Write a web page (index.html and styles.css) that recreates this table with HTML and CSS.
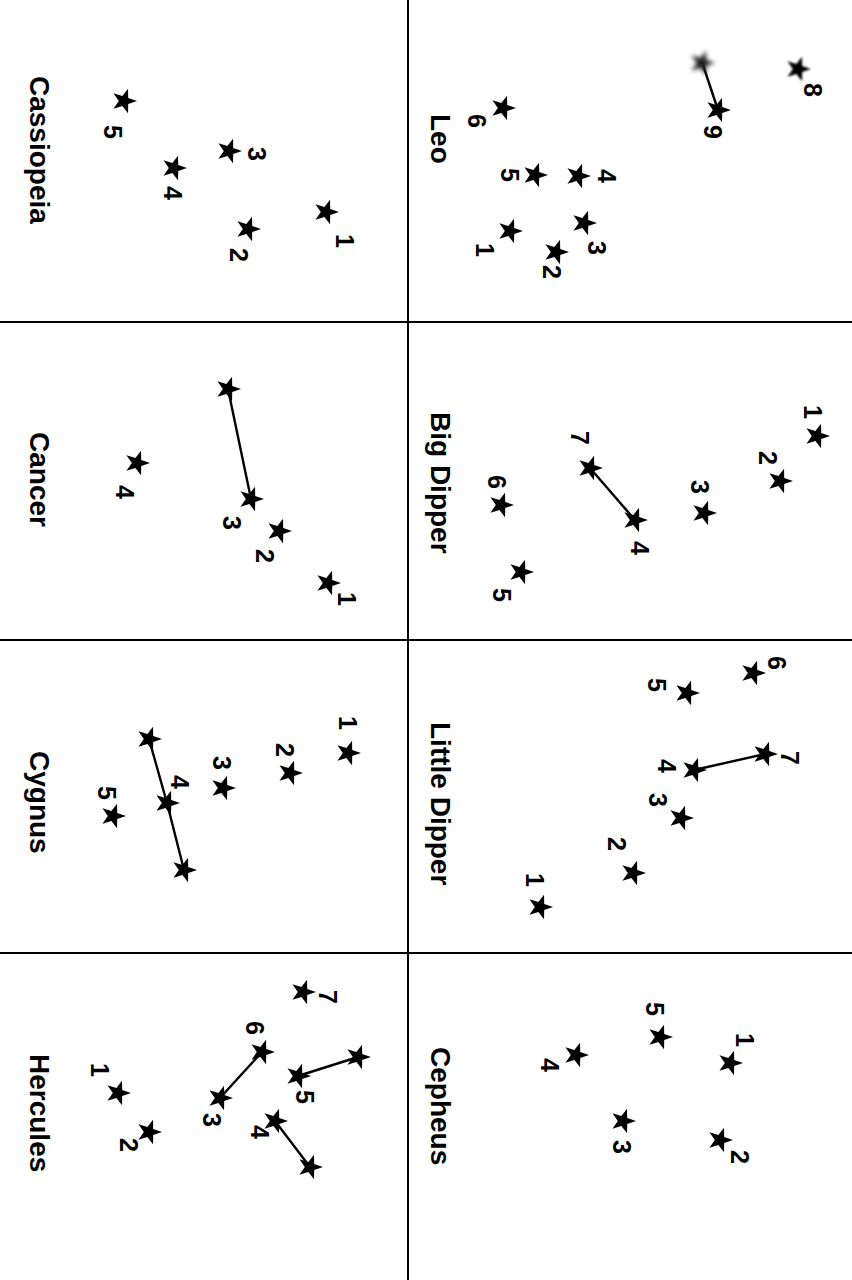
FILE: index.html
```html
<!DOCTYPE html>
<html lang="en">
<head>
<meta charset="utf-8">
<title>Constellations</title>
<link rel="stylesheet" href="styles.css">
</head>
<body>
<svg class="defs" aria-hidden="true">
  <defs>
    <path id="star" d="M13 0 L4.21 3.06 L4.02 12.36 L-1.61 4.95 L-10.52 7.64 L-5.2 0 L-10.52 -7.64 L-1.61 -4.95 L4.02 -12.36 L4.21 -3.06 Z"/>
    <filter id="smudge" x="-50%" y="-50%" width="200%" height="200%"><feGaussianBlur stdDeviation="2.2"/></filter>
    <filter id="soft" x="-50%" y="-50%" width="200%" height="200%"><feGaussianBlur stdDeviation="0.9"/></filter>
  </defs>
</svg>
<main class="sheet">
  <section class="cell cell-cassiopeia">
    <h2 class="title">Cassiopeia</h2>
    <svg class="sky" viewBox="0 0 407 321">
      <use href="#star" x="124" y="101"/><text class="num" transform="translate(113 132) rotate(90)">5</text>
      <use href="#star" x="229" y="151"/><text class="num" transform="translate(257 154) rotate(90)">3</text>
      <use href="#star" x="174" y="168"/><text class="num" transform="translate(173 193) rotate(90)">4</text>
      <use href="#star" x="326" y="212"/><text class="num" transform="translate(345 241) rotate(90)">1</text>
      <use href="#star" x="248" y="229"/><text class="num" transform="translate(239 255) rotate(90)">2</text>
    </svg>
  </section>
  <section class="cell cell-leo">
    <h2 class="title">Leo</h2>
    <svg class="sky" viewBox="409 0 443 321">
      <line class="link" x1="702" y1="62" x2="718" y2="110"/>
      <use href="#star" x="702" y="63" class="smudged"/>
      <use href="#star" x="798" y="69" class="soft"/><text class="num" transform="translate(813 90) rotate(90)">8</text>
      <use href="#star" x="718" y="110"/><text class="num" transform="translate(713 132) rotate(90)">9</text>
      <use href="#star" x="503" y="108"/><text class="num" transform="translate(477 121) rotate(90)">6</text>
      <use href="#star" x="535" y="175"/><text class="num" transform="translate(510 175) rotate(90)">5</text>
      <use href="#star" x="578" y="176"/><text class="num" transform="translate(607 176) rotate(90)">4</text>
      <use href="#star" x="510" y="231"/><text class="num" transform="translate(485 250) rotate(90)">1</text>
      <use href="#star" x="584" y="223"/><text class="num" transform="translate(597 248) rotate(90)">3</text>
      <use href="#star" x="556" y="252"/><text class="num" transform="translate(552 272) rotate(90)">2</text>
    </svg>
  </section>
  <section class="cell cell-cancer">
    <h2 class="title">Cancer</h2>
    <svg class="sky" viewBox="0 323 407 316">
      <line class="link" x1="228" y1="389" x2="251" y2="499"/>
      <use href="#star" x="228" y="389"/>
      <use href="#star" x="251" y="499"/><text class="num" transform="translate(232 523) rotate(90)">3</text>
      <use href="#star" x="279" y="531"/><text class="num" transform="translate(265 556) rotate(90)">2</text>
      <use href="#star" x="328" y="583"/><text class="num" transform="translate(347 599) rotate(90)">1</text>
      <use href="#star" x="137" y="463"/><text class="num" transform="translate(125 492) rotate(90)">4</text>
    </svg>
  </section>
  <section class="cell cell-bigdipper">
    <h2 class="title">Big Dipper</h2>
    <svg class="sky" viewBox="409 323 443 316">
      <line class="link" x1="590" y1="468" x2="635" y2="520"/>
      <use href="#star" x="817" y="436"/><text class="num" transform="translate(813 412) rotate(90)">1</text>
      <use href="#star" x="780" y="481"/><text class="num" transform="translate(768 458) rotate(90)">2</text>
      <use href="#star" x="704" y="513"/><text class="num" transform="translate(700 487) rotate(90)">3</text>
      <use href="#star" x="590" y="468"/><text class="num" transform="translate(580 438) rotate(90)">7</text>
      <use href="#star" x="635" y="520"/><text class="num" transform="translate(640 548) rotate(90)">4</text>
      <use href="#star" x="501" y="505"/><text class="num" transform="translate(497 482) rotate(90)">6</text>
      <use href="#star" x="521" y="572"/><text class="num" transform="translate(502 595) rotate(90)">5</text>
    </svg>
  </section>
  <section class="cell cell-cygnus">
    <h2 class="title">Cygnus</h2>
    <svg class="sky" viewBox="0 641 407 311">
      <polyline class="link" points="149,739 167,803 184,870"/>
      <use href="#star" x="149" y="739"/>
      <use href="#star" x="167" y="803"/><text class="num" transform="translate(180 782) rotate(90)">4</text>
      <use href="#star" x="184" y="870"/>
      <use href="#star" x="113" y="816"/><text class="num" transform="translate(107 793) rotate(90)">5</text>
      <use href="#star" x="223" y="788"/><text class="num" transform="translate(222 763) rotate(90)">3</text>
      <use href="#star" x="290" y="773"/><text class="num" transform="translate(285 750) rotate(90)">2</text>
      <use href="#star" x="348" y="753"/><text class="num" transform="translate(348 723) rotate(90)">1</text>
    </svg>
  </section>
  <section class="cell cell-littledipper">
    <h2 class="title">Little Dipper</h2>
    <svg class="sky" viewBox="409 641 443 311">
      <line class="link" x1="694" y1="770" x2="765" y2="754"/>
      <use href="#star" x="753" y="673"/><text class="num" transform="translate(777 663) rotate(90)">6</text>
      <use href="#star" x="687" y="693"/><text class="num" transform="translate(657 685) rotate(90)">5</text>
      <use href="#star" x="765" y="754"/><text class="num" transform="translate(790 758) rotate(90)">7</text>
      <use href="#star" x="694" y="770"/><text class="num" transform="translate(667 766) rotate(90)">4</text>
      <use href="#star" x="681" y="818"/><text class="num" transform="translate(658 800) rotate(90)">3</text>
      <use href="#star" x="633" y="873"/><text class="num" transform="translate(617 844) rotate(90)">2</text>
      <use href="#star" x="540" y="907"/><text class="num" transform="translate(535 880) rotate(90)">1</text>
    </svg>
  </section>
  <section class="cell cell-hercules">
    <h2 class="title">Hercules</h2>
    <svg class="sky" viewBox="0 954 407 326">
      <line class="link" x1="262" y1="1052" x2="220" y2="1098"/>
      <line class="link" x1="298" y1="1076" x2="358" y2="1057"/>
      <line class="link" x1="275" y1="1121" x2="310" y2="1167"/>
      <use href="#star" x="303" y="992"/><text class="num" transform="translate(328 997) rotate(90)">7</text>
      <use href="#star" x="262" y="1052"/><text class="num" transform="translate(255 1028) rotate(90)">6</text>
      <use href="#star" x="220" y="1098"/><text class="num" transform="translate(212 1120) rotate(90)">3</text>
      <use href="#star" x="358" y="1057"/>
      <use href="#star" x="298" y="1076"/><text class="num" transform="translate(305 1097) rotate(90)">5</text>
      <use href="#star" x="275" y="1121"/><text class="num" transform="translate(260 1132) rotate(90)">4</text>
      <use href="#star" x="310" y="1167"/>
      <use href="#star" x="118" y="1093"/><text class="num" transform="translate(100 1070) rotate(90)">1</text>
      <use href="#star" x="149" y="1132"/><text class="num" transform="translate(129 1145) rotate(90)">2</text>
    </svg>
  </section>
  <section class="cell cell-cepheus">
    <h2 class="title">Cepheus</h2>
    <svg class="sky" viewBox="409 954 443 326">
      <use href="#star" x="660" y="1037"/><text class="num" transform="translate(655 1009) rotate(90)">5</text>
      <use href="#star" x="730" y="1063"/><text class="num" transform="translate(745 1040) rotate(90)">1</text>
      <use href="#star" x="576" y="1055"/><text class="num" transform="translate(550 1065) rotate(90)">4</text>
      <use href="#star" x="623" y="1121"/><text class="num" transform="translate(622 1147) rotate(90)">3</text>
      <use href="#star" x="720" y="1140"/><text class="num" transform="translate(740 1157) rotate(90)">2</text>
    </svg>
  </section>
</main>
</body>
</html>
```
FILE: styles.css
```css
html, body {
  margin: 0;
  padding: 0;
  background: #fff;
}

body {
  font-family: "Liberation Sans", Arial, sans-serif;
  color: #000;
}

.defs {
  position: absolute;
  width: 0;
  height: 0;
  overflow: hidden;
}

.sheet {
  display: grid;
  grid-template-columns: 407px 443px;
  grid-template-rows: 321px 316px 311px 326px;
  gap: 2px;
  width: 852px;
  height: 1280px;
  background: #000;
}

.cell {
  position: relative;
  background: #fff;
  display: flex;
  align-items: flex-start;
  overflow: hidden;
}

.title {
  margin: 0;
  writing-mode: vertical-rl;
  font-size: 28px;
  line-height: 28px;
  font-weight: 700;
  white-space: nowrap;
}

.cell-cassiopeia .title { margin: 76px 0 0 25px; }
.cell-leo .title { margin: 114px 0 0 17px; }
.cell-cancer .title { margin: 109px 0 0 25px; }
.cell-bigdipper .title { margin: 89px 0 0 17px; }
.cell-cygnus .title { margin: 110px 0 0 25px; }
.cell-littledipper .title { margin: 81px 0 0 17px; }
.cell-hercules .title { margin: 100px 0 0 25px; }
.cell-cepheus .title { margin: 93px 0 0 17px; }

.sky {
  position: absolute;
  inset: 0;
  width: 100%;
  height: 100%;
  overflow: visible;
}

.sky use {
  fill: #000;
}

.sky .smudged {
  fill: #222;
  filter: url(#smudge);
}

.sky .soft {
  filter: url(#soft);
}

.link {
  fill: none;
  stroke: #000;
  stroke-width: 2.4;
  stroke-linecap: round;
  stroke-linejoin: round;
}

.num {
  font-family: "Liberation Sans", Arial, sans-serif;
  font-size: 25px;
  font-weight: 700;
  fill: #000;
  text-anchor: middle;
  dominant-baseline: central;
}
```
